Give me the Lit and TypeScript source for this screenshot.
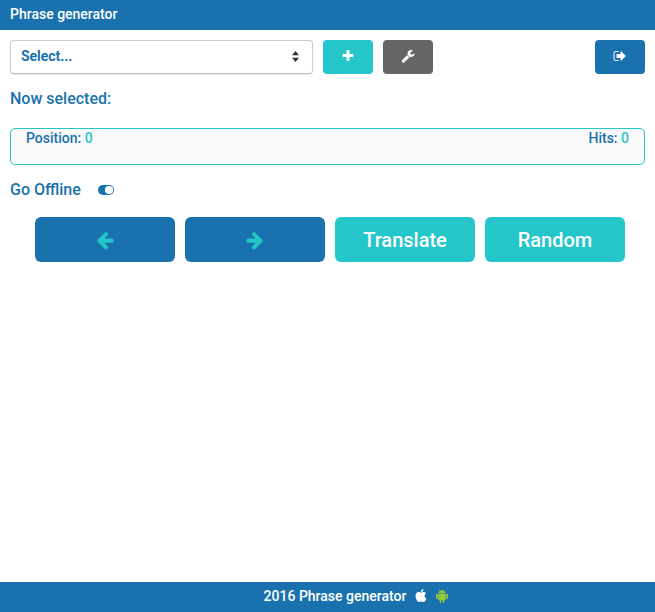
import { LitElement, html, css, svg } from "lit";
import { customElement } from "lit/decorators.js";

const paths = {
  plus: "M1600 736v192q0 40-28 68t-68 28h-416v416q0 40-28 68t-68 28h-192q-40 0-68-28t-28-68v-416h-416q-40 0-68-28t-28-68v-192q0-40 28-68t68-28h416v-416q0-40 28-68t68-28h192q40 0 68 28t28 68v416h416q40 0 68 28t28 68z",
  wrench: "M448 1472q0-26-19-45t-45-19-45 19-19 45 19 45 45 19 45-19 19-45zm644-420l-682 682q-37 37-90 37-52 0-91-37l-106-108q-38-36-38-90 0-53 38-91l681-681q39 98 114.5 173.5t173.5 114.5zm634-435q0 39-23 106-47 134-164.5 217.5t-258.5 83.5q-185 0-316.5-131.5t-131.5-316.5 131.5-316.5 316.5-131.5q58 0 121.5 16.5t107.5 46.5q16 11 16 28t-16 28l-293 169v224l193 107q5-3 79-48.5t135.5-81 70.5-35.5q15 0 23.5 10t8.5 25z",
  signOut: "M704 1440q0 4 1 20t.5 26.5-3 23.5-10 19.5-20.5 6.5h-320q-119 0-203.5-84.5t-84.5-203.5v-704q0-119 84.5-203.5t203.5-84.5h320q13 0 22.5 9.5t9.5 22.5q0 4 1 20t.5 26.5-3 23.5-10 19.5-20.5 6.5h-320q-66 0-113 47t-47 113v704q0 66 47 113t113 47h312l11.5 1 11.5 3 8 5.5 7 9 2 13.5zm928-544q0 26-19 45l-544 544q-19 19-45 19t-45-19-19-45v-288h-448q-26 0-45-19t-19-45v-384q0-26 19-45t45-19h448v-288q0-26 19-45t45-19 45 19l544 544q19 19 19 45z",
  left: "M1664 896v128q0 53-32.5 90.5t-84.5 37.5h-704l293 294q38 36 38 90t-38 90l-75 76q-37 37-90 37-52 0-91-37l-651-652q-37-37-37-90 0-52 37-91l651-650q38-38 91-38 52 0 90 38l75 74q38 38 38 91t-38 91l-293 293h704q52 0 84.5 37.5t32.5 90.5z",
  right: "M1600 960q0 54-37 91l-651 651q-39 37-91 37-51 0-90-37l-75-75q-38-38-38-91t38-91l293-293h-704q-52 0-84.5-37.5t-32.5-90.5v-128q0-53 32.5-90.5t84.5-37.5h704l-293-294q-38-36-38-90t38-90l75-75q38-38 90-38 53 0 91 38l651 651q37 35 37 90z",
  apple: "M1585 1215q-39 125-123 250-129 196-257 196-49 0-140-32-86-32-151-32-61 0-142 33-81 34-132 34-152 0-301-259-147-261-147-503 0-228 113-374 113-144 284-144 72 0 177 30 104 30 138 30 45 0 143-34 102-34 173-34 119 0 213 65 52 36 104 100-79 67-114 118-65 94-65 207 0 124 69 223t158 126zm-376-1173q0 61-29 136-30 75-93 138-54 54-108 72-37 11-104 17 3-149 78-257 74-107 250-148 1 3 2.5 11t2.5 11q0 4 .5 10t.5 10z",
};

const icon = (name: keyof typeof paths) =>
  html`<svg class="icon ${name}" viewBox="0 0 1792 1792">${svg`<path d=${paths[name]} />`}</svg>`;

@customElement("app-root")
export class AppRoot extends LitElement {
  static styles = css`
    :host {
      display: flex;
      flex-direction: column;
      height: 100vh;
      background: #fff;
      color: #1972ad;
      font: 500 14px/20px Roboto, sans-serif;
    }
    * { box-sizing: border-box; }
    header, footer {
      flex: none;
      height: 30px;
      background: #1972ad;
      color: #fff;
      line-height: 29px;
    }
    header { padding-left: 10px; }
    footer { display: flex; justify-content: center; padding-left: 57px; }
    main { flex: 1; padding: 10px 10px 0; }
    button {
      display: flex;
      align-items: center;
      justify-content: center;
      padding: 0;
      border: 0;
      border-radius: 4px;
      background: #1972ad;
      color: #fff;
      font: inherit;
    }
    .icon { display: block; width: 14px; height: 14px; fill: currentColor; }
    .toolbar { display: flex; gap: 10px; height: 34px; }
    .toolbar button { width: 50px; height: 34px; padding-bottom: 2px; }
    .select {
      display: flex;
      align-items: center;
      justify-content: space-between;
      width: 303px;
      padding: 0 13px 2px 10px;
      border: 1px solid #ccc;
      border-bottom-color: #bbb;
      border-radius: 4px;
      background: #fff;
      box-shadow: 0 1px 1px rgba(0, 0, 0, 0.08);
      font-weight: 700;
      letter-spacing: -0.05px;
    }
    .carets { width: 7px; height: 11px; margin-top: 1px; fill: #333; }
    .toolbar .add, .actions .teal { background: #24c6c9; }
    .toolbar .add { padding-right: 1px; }
    .toolbar .settings { background: #666; }
    .toolbar .exit { margin-left: auto; }
    .line { font-size: 16px; line-height: 20px; }
    .selected { margin-top: 15px; }
    .panel {
      display: flex;
      justify-content: space-between;
      height: 37px;
      margin-top: 19px;
      padding: 0 15px;
      border: 1px solid #24c6c9;
      border-radius: 5px;
      background: #fafafa;
      line-height: 19px;
    }
    .count { color: #24c6c9; }
    .offline { display: flex; align-items: center; margin-top: 15px; }
    .toggle { width: 16px; height: 10px; margin-left: 17px; }
    .actions { display: flex; justify-content: center; gap: 10px; margin: 17px 0 0 5px; }
    .actions button {
      width: 140px;
      height: 45px;
      border-radius: 6px;
      font-size: 20px;
    }
    .actions .icon { width: 20px; height: 20px; color: #24c6c9; }
    .apple { margin: 7px 0 0 8px; }
    .android { width: 12px; height: 14px; margin: 7px 0 0 8px; fill: #97c93d; }
  `;

  render() {
    return html`
      <header>Phrase generator</header>
      <main>
        <div class="toolbar">
          <div class="select">
            <span>Select...</span>
            <svg class="carets" viewBox="0 0 7 11"><path d="M0 4.3 3.5 0 7 4.3zM0 6.7h7L3.5 11z" /></svg>
          </div>
          <button class="add" aria-label="Add">${icon("plus")}</button>
          <button class="settings" aria-label="Settings">${icon("wrench")}</button>
          <button class="exit" aria-label="Sign out">${icon("signOut")}</button>
        </div>
        <div class="line selected">Now selected:</div>
        <div class="panel">
          <span>Position: <span class="count">0</span></span>
          <span>Hits: <span class="count">0</span></span>
        </div>
        <div class="line offline">
          <span>Go Offline</span>
          <svg class="toggle" viewBox="0 0 16 10">
            <rect width="16" height="10" rx="5" fill="#1972ad" />
            <circle cx="11" cy="5" r="4.1" fill="#fff" />
          </svg>
        </div>
        <div class="actions">
          <button aria-label="Previous">${icon("left")}</button>
          <button aria-label="Next">${icon("right")}</button>
          <button class="teal">Translate</button>
          <button class="teal">Random</button>
        </div>
      </main>
      <footer>
        <span>2016 Phrase generator</span>
        ${icon("apple")}
        <svg class="android" viewBox="0 0 12 14">
          <path d="M2.3 4.5C2.4 3 3.1 2.2 4 1.7L3.3.5l.3-.2.8 1.3a4.5 4.5 0 0 1 3.2 0L8.4.3l.3.2L8 1.7c.9.5 1.6 1.3 1.7 2.8zM2.3 5h7.4v5.5q0 .8-.8.8h-.6v1.8a.8.8 0 0 1-1.6 0v-1.8H5.3v1.8a.8.8 0 0 1-1.6 0v-1.8h-.6q-.8 0-.8-.8zM0 5.7a.85.85 0 0 1 1.7 0v3.5a.85.85 0 0 1-1.7 0zM10.3 5.7a.85.85 0 0 1 1.7 0v3.5a.85.85 0 0 1-1.7 0z" />
          <circle cx="4.4" cy="3.1" r=".35" fill="#1972ad" />
          <circle cx="7.6" cy="3.1" r=".35" fill="#1972ad" />
        </svg>
      </footer>
    `;
  }
}
